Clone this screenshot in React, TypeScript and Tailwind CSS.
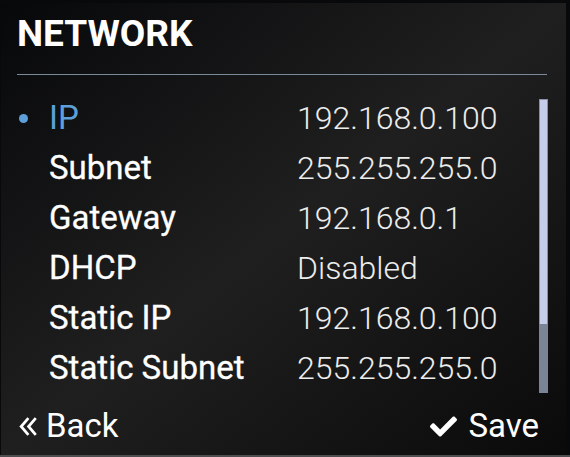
import { FaCheck } from "react-icons/fa";

const rows = [
  { label: "IP", value: "192.168.0.100" },
  { label: "Subnet", value: "255.255.255.0" },
  { label: "Gateway", value: "192.168.0.1" },
  { label: "DHCP", value: "Disabled" },
  { label: "Static IP", value: "192.168.0.100" },
  { label: "Static Subnet", value: "255.255.255.0" },
];

function DoubleChevron() {
  return (
    <svg viewBox="0 0 18 18" className="w-[19px] h-[19px]" fill="none" stroke="currentColor" strokeWidth="2.6" strokeLinecap="square">
      <path d="M9 2 L3 9 L9 16" />
      <path d="M16 2 L10 9 L16 16" />
    </svg>
  );
}

export default function App() {
  const selected = 0;
  return (
    <div className="w-[570px] h-[457px] bg-[#08090b] border-b-2 border-[#4d4e50] pt-[3px] pl-px pr-[4px] font-['Roboto',sans-serif] text-white overflow-hidden">
      <div className="h-[452px] flex flex-col pl-[16px] pr-[19px] pt-[11px] bg-[linear-gradient(to_bottom_right,#07080a_0%,#1f1f1f_50%,#0a0a0b_100%)]">
        <h1 className="text-[37px] leading-[40px] font-bold">NETWORK</h1>
        <div className="h-px bg-[#7b8a99] mt-[20px]" />

        <div className="flex mt-[18px]">
          <div className="flex-1 flex flex-col">
            {rows.map((row, i) => (
              <div key={i} className="flex items-center h-[50px] leading-[50px]">
                <div className="w-[32px] flex items-center">
                  {i === selected && <span className="ml-[2px] w-[9px] h-[9px] rounded-full bg-[#5d9fd9]" />}
                </div>
                {i === selected ? (
                  <span className="w-[248px] text-[33px] font-normal text-[#5d9fd9]">{row.label}</span>
                ) : (
                  <span className="w-[248px] text-[33px] font-normal text-white [-webkit-text-stroke:0.3px_white]">{row.label}</span>
                )}
                <span className="text-[32px] font-light text-[#ececec]">{row.value}</span>
              </div>
            ))}
          </div>
          <div className="w-[9px] mt-[6px] h-[294px] flex flex-col mr-[-1px]">
            <div className="h-[225px] bg-[#c5cdea] border-x border-t border-[#8a90a0]" />
            <div className="flex-1 bg-[#7b8496]" />
          </div>
        </div>

        <div className="flex justify-between items-center mt-[13px] h-[40px] text-[33px] leading-[40px]">
          <span className="flex items-center gap-[9px] pl-[1px]">
            <DoubleChevron />
            Back
          </span>
          <span className="flex items-center gap-[11px] mr-[8px]">
            <FaCheck className="w-[27px] h-[27px]" />
            Save
          </span>
        </div>
      </div>
    </div>
  );
}
